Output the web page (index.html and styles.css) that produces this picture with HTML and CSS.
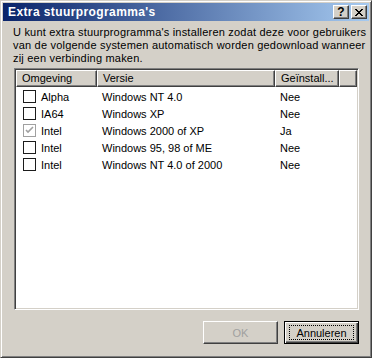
FILE: index.html
```html
<!DOCTYPE html>
<html lang="nl">

<head>
  <meta charset="utf-8">
  <title>Extra stuurprogramma's</title>
  <link rel="stylesheet" href="styles.css">
</head>

<body>
  <div class="window">
    <div class="titlebar">
      <span class="title">Extra stuurprogramma's</span>
      <div class="caption-buttons">
        <div class="cap-btn help">?</div>
        <div class="cap-btn">
          <svg width="8" height="7" viewBox="0 0 8 7">
            <path d="M0 0h2v1h-2zM6 0h2v1h-2zM1 1h2v1h-2zM5 1h2v1h-2zM2 2h4v1h-4zM3 3h2v1h-2zM2 4h4v1h-4zM1 5h2v1h-2zM5 5h2v1h-2zM0 6h2v1h-2zM6 6h2v1h-2z" fill="#000"/>
          </svg>
        </div>
      </div>
    </div>

    <div class="content">
      <p class="intro">U kunt extra stuurprogramma's installeren zodat deze voor gebruikers<br>van de volgende systemen automatisch worden gedownload wanneer<br>zij een verbinding maken.</p>

      <div class="listview">
        <div class="lv-header">
          <div class="hcell col-env">Omgeving</div>
          <div class="hcell col-ver">Versie</div>
          <div class="hcell col-inst">Geïnstall...</div>
          <div class="hcell col-fill"></div>
        </div>
        <div class="lv-body">
          <div class="lv-row">
            <div class="cell col-env"><span class="check"></span>Alpha</div>
            <div class="cell col-ver">Windows NT 4.0</div>
            <div class="cell col-inst">Nee</div>
          </div>
          <div class="lv-row">
            <div class="cell col-env"><span class="check"></span>IA64</div>
            <div class="cell col-ver">Windows XP</div>
            <div class="cell col-inst">Nee</div>
          </div>
          <div class="lv-row">
            <div class="cell col-env">
              <span class="check checked">
                <svg width="9" height="9" viewBox="0 0 9 9">
                  <path d="M1 4l2 2 5-5" stroke="#a0a0a0" stroke-width="1.6" fill="none"/>
                </svg>
              </span>Intel
            </div>
            <div class="cell col-ver">Windows 2000 of XP</div>
            <div class="cell col-inst">Ja</div>
          </div>
          <div class="lv-row">
            <div class="cell col-env"><span class="check"></span>Intel</div>
            <div class="cell col-ver">Windows 95, 98 of ME</div>
            <div class="cell col-inst">Nee</div>
          </div>
          <div class="lv-row">
            <div class="cell col-env"><span class="check"></span>Intel</div>
            <div class="cell col-ver">Windows NT 4.0 of 2000</div>
            <div class="cell col-inst">Nee</div>
          </div>
        </div>
      </div>

      <div class="actions">
        <div class="btn disabled">OK</div>
        <div class="btn default"><span class="focus">Annuleren</span></div>
      </div>
    </div>
  </div>
</body>

</html>
```

FILE: styles.css
```css
body {
  margin: 0;
  font-family: 'Liberation Sans', Arial, sans-serif;
  font-size: 11px;
  color: #000;
  background-color: #d4d0c8;
}

.window {
  width: 372px;
  height: 358px;
  box-sizing: border-box;
  border: 1px solid;
  border-color: #d4d0c8 #404040 #404040 #d4d0c8;
  box-shadow: inset 1px 1px #fff, inset -1px -1px #808080;
  padding: 2px;
  display: flex;
  flex-direction: column;
  background-color: #d4d0c8;
}

.titlebar {
  height: 18px;
  display: flex;
  align-items: center;
  justify-content: space-between;
  padding: 0 2px 0 5px;
  background: linear-gradient(to right, #0a246a, #a6caf0);
  color: #fff;
}

.title {
  font-weight: bold;
  font-size: 12px;
  letter-spacing: 0.4px;
}

.caption-buttons {
  display: flex;
  gap: 2px;
}

.cap-btn {
  width: 16px;
  height: 14px;
  box-sizing: border-box;
  border: 1px solid;
  border-color: #fff #404040 #404040 #fff;
  box-shadow: inset -1px -1px #808080;
  background-color: #d4d0c8;
  color: #000;
  display: flex;
  align-items: center;
  justify-content: center;
}

.cap-btn.help {
  font-weight: bold;
  font-size: 12px;
  line-height: 12px;
}

.content {
  flex: 1;
  display: flex;
  flex-direction: column;
  padding: 5px 10px 11px 10px;
}

.intro {
  margin: 0;
  line-height: 13px;
  letter-spacing: 0.2px;
  white-space: nowrap;
}

.listview {
  flex: 1;
  margin: 3px 0 0 1px;
  width: 345px;
  box-sizing: border-box;
  border: 1px solid;
  border-color: #808080 #fff #fff #808080;
  box-shadow: inset 1px 1px #404040, inset -1px -1px #d4d0c8;
  padding: 1px;
  background-color: #fff;
}

.lv-header {
  display: flex;
  height: 17px;
}

.hcell {
  box-sizing: border-box;
  height: 17px;
  border-top: 1px solid #fff;
  border-left: 1px solid #fff;
  border-right: 1px solid #404040;
  border-bottom: 1px solid #404040;
  box-shadow: inset -1px -1px #808080;
  background-color: #d4d0c8;
  padding: 1px 0 0 5px;
  line-height: 13px;
  white-space: nowrap;
}

.col-env {
  width: 81px;
}

.col-ver {
  width: 178px;
}

.col-inst {
  width: 64px;
}

.col-fill {
  flex: 1;
}

.lv-body {
  padding-top: 1px;
}

.lv-row {
  display: flex;
  height: 17px;
  align-items: center;
}

.cell {
  box-sizing: border-box;
  padding-left: 5px;
  white-space: nowrap;
  display: flex;
  align-items: center;
}

.lv-row .col-env {
  padding-left: 7px;
}

.check {
  width: 13px;
  height: 13px;
  box-sizing: border-box;
  border: 1px solid #1c1c1c;
  background-color: #fff;
  margin-right: 5px;
  display: flex;
  align-items: center;
  justify-content: center;
}

.check.checked {
  border-color: #a0a0a0;
}

.actions {
  display: flex;
  justify-content: flex-end;
  gap: 6px;
  margin-top: 11px;
}

.btn {
  width: 75px;
  height: 23px;
  box-sizing: border-box;
  border: 1px solid;
  border-color: #fff #404040 #404040 #fff;
  box-shadow: inset -1px -1px #808080;
  display: flex;
  align-items: center;
  justify-content: center;
}

.btn.disabled {
  color: #a0a0a0;
}

.btn.default {
  border: 1px solid #000;
  box-shadow: inset 1px 1px #fff, inset -1px -1px #404040, inset -2px -2px #808080;
}

.focus {
  width: 65px;
  height: 15px;
  box-sizing: border-box;
  border: 1px dotted #000;
  display: flex;
  align-items: center;
  justify-content: center;
}
```
